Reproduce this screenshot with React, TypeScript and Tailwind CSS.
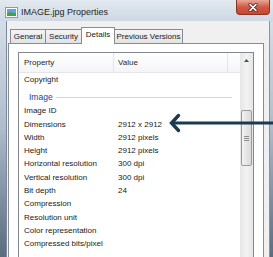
const rows: [string, string][] = [
  ["Image ID", ""],
  ["Dimensions", "2912 x 2912"],
  ["Width", "2912 pixels"],
  ["Height", "2912 pixels"],
  ["Horizontal resolution", "300 dpi"],
  ["Vertical resolution", "300 dpi"],
  ["Bit depth", "24"],
  ["Compression", ""],
  ["Resolution unit", ""],
  ["Color representation", ""],
  ["Compressed bits/pixel", ""],
];

const tabs = ["General", "Security", "Details", "Previous Versions"];
const tabWidths = ["w-[36px]", "w-[37px]", "w-[34px]", "w-[69px]"];

function PropRow({ name, value }: { name: string; value: string }) {
  return (
    <div className="flex h-[13.3px] items-center text-[8px] leading-[13.3px] text-[#1a1a1a]">
      <div className="w-[95px] shrink-0 pl-[5px] whitespace-nowrap">{name}</div>
      <div className="pl-[4px] whitespace-nowrap">{value}</div>
    </div>
  );
}

export default function App() {
  return (
    <div className="relative flex h-[257px] w-[273px] flex-col overflow-hidden bg-linear-to-b from-[#dde5ee] via-[#aebccb] to-[#5b6b80] font-['Liberation_Sans',Arial,sans-serif]">
      {/* title bar */}
      <div className="flex h-[21px] shrink-0 items-start bg-linear-to-b from-[#e2e9f0] to-[#cfd9e3]">
        <svg className="mt-[7px] ml-[5px]" width="13" height="11" viewBox="0 0 13 11">
          <rect x="0.5" y="0.5" width="12" height="10" fill="#ffffff" stroke="#8d9aa8" />
          <rect x="2" y="2" width="9" height="7" fill="#5aa7e0" />
          <path d="M2 9 L2 6.5 Q5 4.5 8 6 Q10 6.5 11 6 L11 9 Z" fill="#4f9a3a" />
        </svg>
        <span className="mt-[6px] ml-[3px] text-[9px] leading-[12px] text-[#1e1e1e]">IMAGE.jpg Properties</span>
        <button
          className="mr-[3px] ml-auto flex h-[15px] w-[34px] items-center justify-center rounded-b-[4px] border border-t-0 border-[#8b3426] bg-linear-to-b from-[#e9a797] via-[#cf5a45] to-[#c8442d]"
          type="button"
        >
          <svg width="10" height="9" viewBox="0 0 10 9">
            <path d="M2 1.5 L8 7.5 M8 1.5 L2 7.5" stroke="#5a2a22" strokeWidth="3.2" strokeLinecap="round" />
            <path d="M2 1.5 L8 7.5 M8 1.5 L2 7.5" stroke="#ffffff" strokeWidth="1.7" strokeLinecap="round" />
          </svg>
        </button>
      </div>

      <div className="flex min-h-0 flex-1">
        <div className="w-[7px] shrink-0 border-r border-[#7d8a99]" />

        {/* client area */}
        <div className="flex min-h-0 flex-1 flex-col bg-[#f0f0f0] pt-[6px] pr-[5px] pl-[1px]">
          <div className="flex h-[16px] shrink-0 items-end pl-[2px]">
            {tabs.map((t, i) => {
              const active = t === "Details";
              return (
                <div
                  key={t}
                  className={`${tabWidths[i]} ${i > 0 ? "-ml-px" : ""} flex items-center justify-center border border-b-0 border-[#898c95] text-[8px] whitespace-nowrap text-[#1a1a1a] ${
                    active
                      ? "relative z-10 -mb-px h-[17px] bg-white pb-[2px]"
                      : "h-[14px] bg-linear-to-b from-[#f4f4f4] to-[#e2e2e2]"
                  }`}
                >
                  {t}
                </div>
              );
            })}
          </div>

          {/* tab page */}
          <div className="flex min-h-0 flex-1 flex-col border border-b-0 border-[#898c95] bg-white px-[9px] pt-[8px]">
            <div className="flex min-h-0 flex-1 border border-b-0 border-[#828790] bg-white">
              <div className="flex min-w-0 flex-1 flex-col">
                <div className="flex h-[20px] shrink-0 items-center border-b border-[#e3e5e8] bg-linear-to-b from-white to-[#f4f5f7] text-[8px] text-[#2a2a2a]">
                  <div className="flex h-full w-[95px] items-center border-r border-[#e3e5e8] pl-[5px]">Property</div>
                  <div className="flex h-full w-[114px] items-center border-r border-[#e3e5e8] pl-[4px]">Value</div>
                </div>
                <PropRow name="Copyright" value="" />
                <div className="flex h-[18px] items-end">
                  <div className="flex h-[13.3px] w-full items-center pl-[10px]">
                    <span className="text-[8.5px] text-[#23409a]">Image</span>
                    <div className="mr-[8px] ml-[3px] h-px flex-1 bg-[#c9d6ef]" />
                  </div>
                </div>
                {rows.map(([n, v]) => (
                  <PropRow key={n} name={n} value={v} />
                ))}
              </div>

              {/* scrollbar */}
              <div className="flex w-[13px] shrink-0 flex-col bg-linear-to-r from-[#e6e6e6] via-[#f2f2f2] to-[#e6e6e6]">
                <div className="flex h-[14px] items-center justify-center">
                  <svg width="5" height="3" viewBox="0 0 5 3">
                    <path d="M0 3 L2.5 0 L5 3 Z" fill="#4d4d4d" />
                  </svg>
                </div>
                <div className="mx-px mt-[43px] flex h-[56px] items-center justify-center rounded-[2px] border border-[#9a9a9a] bg-linear-to-r from-[#f2f2f2] to-[#dadada]">
                  <div className="flex flex-col gap-[1px]">
                    <div className="h-px w-[5px] bg-[#8c8c8c]" />
                    <div className="h-px w-[5px] bg-[#8c8c8c]" />
                    <div className="h-px w-[5px] bg-[#8c8c8c]" />
                  </div>
                </div>
              </div>
            </div>
          </div>
        </div>

        <div className="w-[4px] shrink-0 border-l border-[#8794a3]" />
      </div>

      {/* annotation arrow */}
      <svg className="pointer-events-none absolute top-0 left-0" width="273" height="257" viewBox="0 0 273 257">
        <path d="M172.5 123 H273" stroke="#1b3a50" strokeWidth="3" />
        <path d="M178.5 115.5 L171.5 123 L178.5 130.5" stroke="#1b3a50" strokeWidth="3.4" fill="none" strokeLinecap="round" strokeLinejoin="miter" />
      </svg>
    </div>
  );
}
